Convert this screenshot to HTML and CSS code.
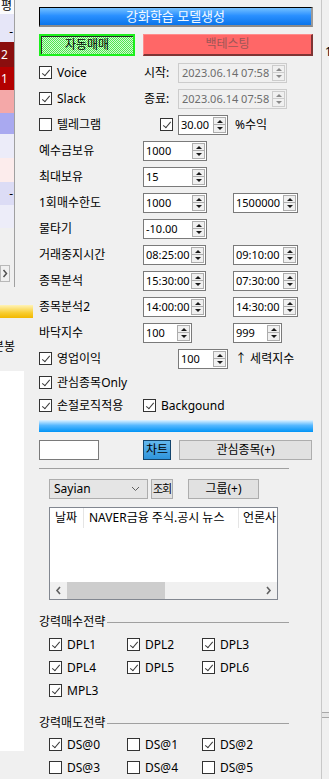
FILE: index.html
```html
<!DOCTYPE html>
<html lang="ko">
<head>
  <meta charset="UTF-8">
  <meta content="width=device-width, initial-scale=1.0" name="viewport">
  <title>강화학습 설정</title>
  <link rel="stylesheet" href="styles.css">
</head>
<body>
<div class="screen">
  <aside class="behind-left">
    <div class="grid-col">
      <div class="cell c-head">평</div>
      <div class="cell c-lav dash">-</div>
      <div class="cell c-dred">2</div>
      <div class="cell c-red">1</div>
      <div class="cell c-pink"></div>
      <div class="cell c-peri"></div>
      <div class="cell c-pale"></div>
      <div class="cell c-rose"></div>
      <div class="cell c-lav2 dash">-</div>
      <div class="cell c-pale2"></div>
      <div class="grid-rest">
        <span class="grid-arrow">
          <svg width="6" height="9" viewBox="0 0 6 9"><path d="M1.5 1l3 3.5-3 3.5" fill="none" stroke="#505050" stroke-width="1.5"/></svg>
        </span>
      </div>
    </div>
    <div class="gold-bar"></div>
    <div class="bong">분봉</div>
    <div class="white-pane"></div>
  </aside>

  <main class="dialog">
    <button class="btn-model" type="button">강화학습 모델생성</button>

    <div class="btn-row">
      <button class="btn-auto" type="button">자동매매</button>
      <button class="btn-back" type="button">백테스팅</button>
    </div>

    <form class="form">
      <div class="row">
        <label class="chk lead-date"><span class="cb on"></span>Voice</label>
        <span class="tag">시작:</span>
        <span class="num date off"><span class="val">2023.06.14 07:58</span><span class="spin"><i class="up"></i><i class="dn"></i></span></span>
      </div>
      <div class="row">
        <label class="chk lead-date"><span class="cb on"></span>Slack</label>
        <span class="tag">종료:</span>
        <span class="num date off"><span class="val">2023.06.14 07:58</span><span class="spin"><i class="up"></i><i class="dn"></i></span></span>
      </div>
      <div class="row">
        <label class="chk lead-tg"><span class="cb"></span>텔레그램</label>
        <span class="cb on solo"></span>
        <span class="num w50"><span class="val">30.00</span><span class="spin"><i class="up"></i><i class="dn"></i></span></span>
        <span class="unit">%수익</span>
      </div>
      <div class="row">
        <span class="name">예수금보유</span>
        <span class="num w64"><span class="val">1000</span><span class="spin"><i class="up"></i><i class="dn"></i></span></span>
      </div>
      <div class="row">
        <span class="name">최대보유</span>
        <span class="num w64"><span class="val">15</span><span class="spin"><i class="up"></i><i class="dn"></i></span></span>
      </div>
      <div class="row">
        <span class="name">1회매수한도</span>
        <span class="num w64"><span class="val">1000</span><span class="spin"><i class="up"></i><i class="dn"></i></span></span>
        <span class="num w65 col2"><span class="val">1500000</span><span class="spin"><i class="up"></i><i class="dn"></i></span></span>
      </div>
      <div class="row">
        <span class="name">물타기</span>
        <span class="num w64"><span class="val">-10.00</span><span class="spin"><i class="up"></i><i class="dn"></i></span></span>
      </div>
      <div class="row">
        <span class="name">거래중지시간</span>
        <span class="num w63"><span class="val">08:25:00</span><span class="spin"><i class="up"></i><i class="dn"></i></span></span>
        <span class="num w65 col2t"><span class="val">09:10:00</span><span class="spin"><i class="up"></i><i class="dn"></i></span></span>
      </div>
      <div class="row">
        <span class="name">종목분석</span>
        <span class="num w63"><span class="val">15:30:00</span><span class="spin"><i class="up"></i><i class="dn"></i></span></span>
        <span class="num w65 col2t"><span class="val">07:30:00</span><span class="spin"><i class="up"></i><i class="dn"></i></span></span>
      </div>
      <div class="row">
        <span class="name">종목분석2</span>
        <span class="num w63"><span class="val">14:00:00</span><span class="spin"><i class="up"></i><i class="dn"></i></span></span>
        <span class="num w65 col2t"><span class="val">14:30:00</span><span class="spin"><i class="up"></i><i class="dn"></i></span></span>
      </div>
      <div class="row">
        <span class="name">바닥지수</span>
        <span class="num w49"><span class="val">100</span><span class="spin"><i class="up"></i><i class="dn"></i></span></span>
        <span class="num w49 col2s"><span class="val">999</span><span class="spin"><i class="up"></i><i class="dn"></i></span></span>
      </div>
      <div class="row">
        <label class="chk lead-op"><span class="cb on"></span>영업이익</label>
        <span class="num w50"><span class="val">100</span><span class="spin"><i class="up"></i><i class="dn"></i></span></span>
        <span class="unit">↑ 세력지수</span>
      </div>
    </form>

    <div class="checks">
      <div class="row">
        <label class="chk"><span class="cb on"></span>관심종목Only</label>
      </div>
      <div class="row">
        <label class="chk lead-name"><span class="cb on"></span>손절로직적용</label>
        <label class="chk"><span class="cb on"></span>Backgound</label>
      </div>
    </div>

    <div class="progress"></div>

    <div class="chart-row">
      <span class="textbox"></span>
      <button class="btn-chart" type="button">차트</button>
      <button class="btn w133" type="button">관심종목(+)</button>
    </div>

    <hr class="sep">

    <div class="query-row">
      <span class="combo">Sayian
        <svg width="9" height="6" viewBox="0 0 9 6"><path d="M1 1l3.5 3.5L8 1" fill="none" stroke="#606060" stroke-width="1"/></svg>
      </span>
      <button class="btn w22" type="button">조회</button>
      <button class="btn w71" type="button">그룹(+)</button>
    </div>

    <div class="list">
      <div class="list-head">
        <span class="hd hd-date">날짜</span>
        <span class="hd hd-title">NAVER금융 주식.공시 뉴스</span>
        <span class="hd hd-press">언론사</span>
      </div>
      <div class="list-body"></div>
      <div class="hscroll">
        <span class="sb-arrow">
          <svg width="7" height="9" viewBox="0 0 7 9"><path d="M5 1L2 4.5 5 8" fill="none" stroke="#606060" stroke-width="1.6"/></svg>
        </span>
        <span class="sb-thumb"></span>
        <span class="sb-track"></span>
        <span class="sb-arrow">
          <svg width="7" height="9" viewBox="0 0 7 9"><path d="M2 1l3 3.5L2 8" fill="none" stroke="#606060" stroke-width="1.6"/></svg>
        </span>
      </div>
    </div>

    <div class="group-title buy">강력매수전략</div>
    <div class="strategy">
      <label class="chk"><span class="cb on"></span>DPL1</label>
      <label class="chk"><span class="cb on"></span>DPL2</label>
      <label class="chk"><span class="cb on"></span>DPL3</label>
      <label class="chk"><span class="cb on"></span>DPL4</label>
      <label class="chk"><span class="cb on"></span>DPL5</label>
      <label class="chk"><span class="cb on"></span>DPL6</label>
      <label class="chk"><span class="cb on"></span>MPL3</label>
    </div>

    <div class="group-title sell">강력매도전략</div>
    <div class="strategy sell-list">
      <label class="chk"><span class="cb on"></span>DS@0</label>
      <label class="chk"><span class="cb"></span>DS@1</label>
      <label class="chk"><span class="cb on"></span>DS@2</label>
      <label class="chk"><span class="cb"></span>DS@3</label>
      <label class="chk"><span class="cb"></span>DS@4</label>
      <label class="chk"><span class="cb"></span>DS@5</label>
    </div>
  </main>

  <aside class="behind-right">
    <span class="peek">1</span>
    <div class="peek-bottom"></div>
  </aside>
</div>
</body>
</html>
```

FILE: styles.css
```css
* {
  box-sizing: border-box;
}

html,
body {
  margin: 0;
}

body {
  background: #f0f0f0;
  color: #000;
  font-family: "Noto Sans", "Noto Sans CJK KR", sans-serif;
  font-size: 12px;
  line-height: 14px;
  overflow: hidden;
}

button {
  font: inherit;
  color: inherit;
  padding: 0;
  cursor: default;
  white-space: nowrap;
}

.screen {
  display: flex;
  height: 779px;
  overflow: hidden;
}

/* window behind, left */
.behind-left {
  display: flex;
  flex: none;
  flex-direction: column;
  width: 33px;
}

.grid-col {
  border-right: 1px solid #a0a0a0;
  display: flex;
  flex-direction: column;
  height: 287px;
  width: 15px;
}

.cell {
  align-items: center;
  color: #fff;
  display: flex;
  flex: none;
  overflow: hidden;
  padding-left: 1px;
}

.cell.dash {
  color: #000;
  justify-content: flex-end;
  padding-right: 1px;
}

.c-head {
  align-items: flex-start;
  background: #fbfbfd;
  color: #000;
  height: 14px;
  line-height: 12px;
}
.c-lav { background: #e6e6f8; height: 28px; align-items: flex-end; padding-bottom: 3px; }
.c-dred { background: #8a0e0e; height: 25px; }
.c-red { background: #b30000; height: 23px; }
.c-pink { background: #f4a8a8; height: 23px; }
.c-peri { background: #a9a9f0; height: 21px; }
.c-pale { background: #ececf9; height: 24px; }
.c-rose { background: #fcecec; height: 24px; }
.c-lav2 { background: #dcdcf5; height: 23px; }
.c-pale2 { background: #ededf9; height: 23px; }

.grid-rest {
  flex: 1;
  padding-top: 37px;
}

.grid-arrow {
  align-items: center;
  border: 1px solid #b8b8b8;
  display: flex;
  height: 17px;
  justify-content: center;
  width: 10px;
}

.gold-bar {
  background: linear-gradient(#fff3b8, #f8cd30 60%, #f2b800);
  height: 13px;
  margin-top: 18px;
}

.bong {
  margin-left: -7px;
  margin-top: 21px;
  line-height: 16px;
  white-space: nowrap;
}

.white-pane {
  background: #fff;
  height: 380px;
  margin-top: 16px;
  width: 24px;
}

/* dialog */
.dialog {
  border-right: 1px solid #c8c8c8;
  display: flex;
  flex: none;
  flex-direction: column;
  padding: 7px 8px 0 6px;
  width: 289px;
}

.btn-model {
  background: linear-gradient(#74c0ff, #2a90ff 45%, #0a74ea);
  border: 1px solid #000;
  border-bottom: 2px solid #8a8a8a;
  border-right: 2px solid #9a9a9a;
  color: #f4faff;
  font-size: 13px;
  height: 21px;
  width: 274px;
}

.btn-row {
  display: flex;
  gap: 8px;
  margin-top: 7px;
}

.btn-auto {
  background-color: #d4f8d4;
  background-image: conic-gradient(#4ee84e 25%, transparent 0 50%, #4ee84e 0 75%, transparent 0);
  background-size: 2px 2px;
  border: 2px solid #1cf01c;
  box-shadow: inset 1px 1px 0 #2a2a2a;
  height: 22px;
  width: 96px;
}

.btn-back {
  background: #ff6767;
  border: 1px solid #ff8c8c;
  border-bottom: 2px solid #7e3434;
  border-right: 2px solid #7e3434;
  color: #9c5656;
  height: 22px;
  width: 170px;
}

.form {
  display: flex;
  flex-direction: column;
  gap: 6px;
  margin: 7px 0 0;
}

.row {
  align-items: center;
  display: flex;
  height: 20px;
  white-space: nowrap;
}

.chk {
  align-items: center;
  display: flex;
  gap: 5px;
  white-space: nowrap;
}

.cb {
  background: #fff;
  border: 1px solid #333;
  display: inline-block;
  flex: none;
  height: 13px;
  position: relative;
  width: 13px;

  &.on::after {
    border-bottom: 1.3px solid #3a3a3a;
    border-right: 1.3px solid #3a3a3a;
    content: "";
    height: 7px;
    left: 4px;
    position: absolute;
    top: 1px;
    transform: rotate(40deg);
    width: 3px;
  }
}

.solo {
  margin-right: 5px;
}

.lead-date { width: 105px; }
.lead-tg { width: 121px; }
.lead-op { width: 139px; }
.lead-name { width: 104px; }

.tag {
  width: 34px;
}

.name {
  width: 104px;
}

.unit {
  margin-left: 7px;
}

.num {
  align-items: center;
  background: #fff;
  border: 1px solid #7a7a7a;
  display: flex;
  font-size: 11px;
  height: 20px;
  padding: 0 1px 0 2px;

  & .val {
    flex: 1;
    overflow: hidden;
  }

  &.off {
    background: #f0f0f0;
    border-color: #cccccc;
    color: #6d6d6d;
    padding-left: 3px;

    & .spin {
      border-color: #cccccc;
    }

    & .spin i {
      border-color: #cccccc;
    }

    & .up::before {
      border-bottom-color: #8a8a8a;
    }

    & .dn::before {
      border-top-color: #8a8a8a;
    }
  }
}

.date { width: 109px; }
.w49 { width: 49px; }
.w50 { width: 50px; }
.w63 { width: 63px; }
.w64 { width: 64px; }
.w65 { width: 65px; }

.col2 { margin-left: 26px; }
.col2t { margin-left: 27px; }
.col2s { margin-left: 41px; }

.spin {
  background: #f0f0f0;
  border: 1px solid #adadad;
  display: flex;
  flex: none;
  flex-direction: column;
  height: 16px;
  width: 13px;

  & i {
    align-items: center;
    display: flex;
    flex: 1;
    justify-content: center;
  }

  & .up {
    border-bottom: 1px solid #adadad;
  }

  & .up::before {
    border-bottom: 3px solid #1a1a1a;
    border-left: 3px solid transparent;
    border-right: 3px solid transparent;
    content: "";
  }

  & .dn::before {
    border-left: 3px solid transparent;
    border-right: 3px solid transparent;
    border-top: 3px solid #1a1a1a;
    content: "";
  }
}

.checks {
  display: flex;
  flex-direction: column;
  gap: 3px;
  margin-top: 4px;
}

.progress {
  background: linear-gradient(#e2f3ff, #56b8ff 45%, #0093f5);
  height: 13px;
  margin-top: 4px;
  width: 274px;
}

.chart-row {
  align-items: center;
  display: flex;
  height: 20px;
  margin-top: 8px;
}

.textbox {
  background: #fff;
  border: 1px solid #7a7a7a;
  height: 20px;
  width: 60px;
}

.btn-chart {
  background: linear-gradient(#64b8ee, #2e94dc);
  border: 1px solid #14466e;
  height: 20px;
  margin-left: 44px;
  width: 28px;
}

.btn {
  background: #e1e1e1;
  border: 1px solid #adadad;
  height: 20px;
}

.w133 { margin-left: 8px; width: 133px; }
.w22 { margin-left: 3px; width: 22px; font-size: 11px; letter-spacing: -1px; }
.w71 { margin-left: 15px; width: 71px; }

.sep {
  border: 0;
  border-top: 1px solid #a0a0a0;
  margin: 8px 0 0;
  width: 250px;
}

.query-row {
  align-items: center;
  display: flex;
  margin-top: 10px;
  padding-left: 10px;
}

.combo {
  align-items: center;
  background: #e5e5e5;
  border: 1px solid #adadad;
  display: flex;
  height: 20px;
  justify-content: space-between;
  padding: 0 7px 0 4px;
  width: 99px;
}

.list {
  background: #fff;
  border: 1px solid #828790;
  display: flex;
  flex-direction: column;
  height: 99px;
  margin: 8px 0 0 10px;
  overflow: hidden;
  width: 229px;
}

.list-head {
  display: flex;
  height: 20px;
  white-space: nowrap;
}

.hd {
  align-items: center;
  border-right: 1px solid #e5e5e5;
  display: flex;
  flex: none;
  padding-left: 5px;
}

.hd-date { width: 34px; }
.hd-title { width: 155px; }
.hd-press { border-right: 0; padding-left: 4px; }

.list-body {
  flex: 1;
}

.hscroll {
  background: #f0f0f0;
  display: flex;
  height: 17px;
}

.sb-arrow {
  align-items: center;
  display: flex;
  justify-content: center;
  width: 17px;
}

.sb-thumb {
  background: #cdcdcd;
  width: 98px;
}

.sb-track {
  flex: 1;
}

.group-title {
  align-items: center;
  display: flex;
  width: 250px;

  &::after {
    background: #a0a0a0;
    content: "";
    flex: 1;
    height: 1px;
    margin-left: 2px;
  }
}

.buy { margin-top: 15px; }
.sell { margin-top: 14px; }

.strategy {
  display: grid;
  grid-auto-rows: 23px;
  grid-template-columns: 78px 75px auto;
  margin-top: 4px;
  padding-left: 10px;
}

.sell-list {
  margin-top: 3px;
}

/* window behind, right */
.behind-right {
  display: flex;
  flex: 1;
  flex-direction: column;
  overflow: hidden;
}

.peek {
  margin-top: 45px;
  padding-left: 3px;
}

.peek-bottom {
  background: #e6e6e6;
  border-bottom: 1px solid #a8a8a8;
  border-top: 1px solid #a8a8a8;
  height: 6px;
  margin-top: 653px;
}
```
